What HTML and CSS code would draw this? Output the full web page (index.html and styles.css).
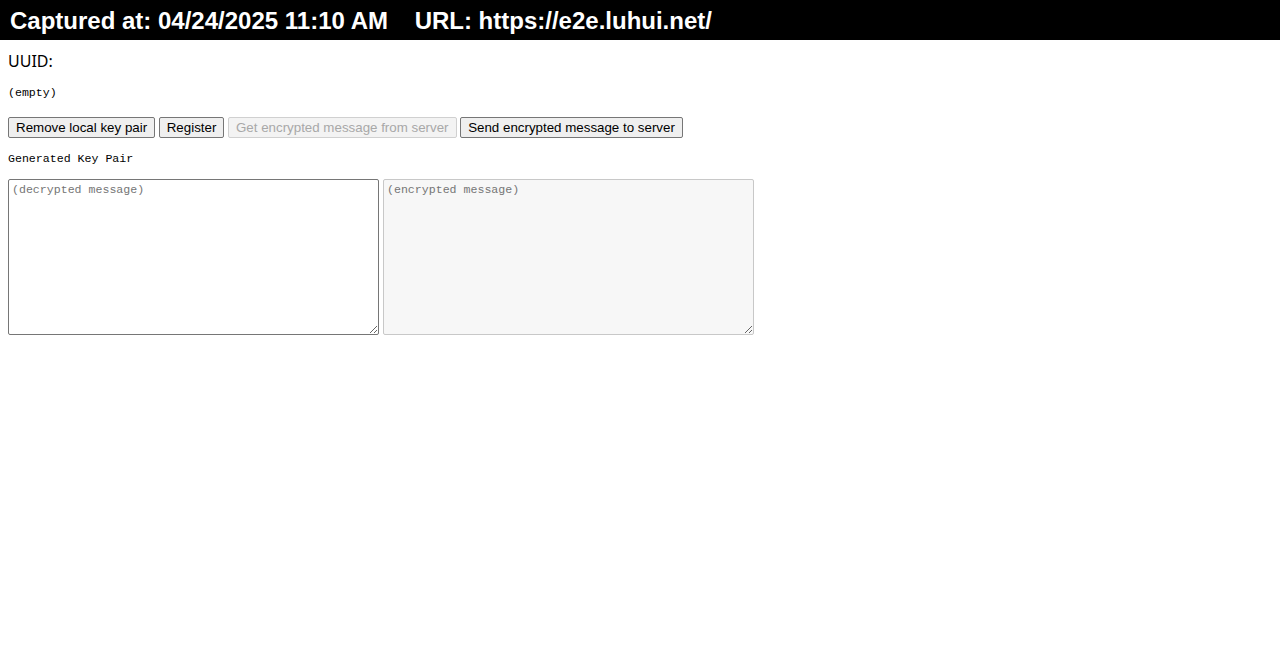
FILE: index.html
```html
<!DOCTYPE html>
<html lang="en">
<head>
	<meta charset="UTF-8">
	<title>e2e</title>
	<link rel="stylesheet" href="styles.css">
</head>
<body>
	<div class="banner">Captured at: 04/24/2025 11:10 AM    URL: https://e2e.luhui.net/</div>
	<div class="page">
		<div class="uuid">UUID:</div>
		<pre class="mono value">(empty)</pre>
		<div class="actions">
			<button>Remove local key pair</button>
			<button>Register</button>
			<button disabled>Get encrypted message from server</button>
			<button>Send encrypted message to server</button>
		</div>
		<pre class="mono keys">Generated Key Pair</pre>
		<div class="boxes">
			<textarea placeholder="(decrypted message)"></textarea>
			<textarea placeholder="(encrypted message)" disabled></textarea>
		</div>
	</div>
</body>
</html>
```

FILE: styles.css
```css
body{
	margin: 0;
	font-family: "Liberation Sans", Arial, sans-serif;
	color: #000;
	background: #fff;
}
.banner{
	box-sizing: border-box;
	height: 40px;
	line-height: 40px;
	padding: 1px 0 0 10px;
	background: #000;
	color: #fff;
	font-size: 24px;
	font-weight: bold;
	white-space: pre;
}
.page{
	padding: 0 8px;
}
.uuid{
	margin-top: 10px;
	font-family: "Noto Sans", "Liberation Sans", sans-serif;
	font-size: 16px;
	line-height: 22px;
}
.mono{
	margin: 0;
	font-family: "Liberation Mono", monospace;
	font-size: 11.6px;
	line-height: 16px;
}
.value{
	margin-top: 13px;
}
.actions{
	display: flex;
	gap: 3.6px;
	margin-top: 16px;
}
button{
	height: 21px;
	padding: 0 7px;
	font-family: "Liberation Sans", Arial, sans-serif;
	font-size: 13.33px;
	color: #000;
	background: #efefef;
	border: 1px solid #767676;
	border-radius: 2px;
}
button:disabled{
	color: #a8a8a8;
	background: #f3f3f3;
	border-color: #d0d0d0;
}
.keys{
	margin-top: 13px;
}
.boxes{
	display: flex;
	gap: 4px;
	margin-top: 12px;
}
textarea{
	box-sizing: border-box;
	width: 371px;
	height: 156px;
	margin: 0;
	padding: 3px 3px 2px;
	font-family: "Liberation Mono", monospace;
	font-size: 11.6px;
	border: 1px solid #767676;
	border-radius: 2px;
	background: #fff;
}
textarea::placeholder{
	color: #757575;
}
textarea:disabled{
	background: #f7f7f7;
	border-color: #c8c8c8;
}
```
